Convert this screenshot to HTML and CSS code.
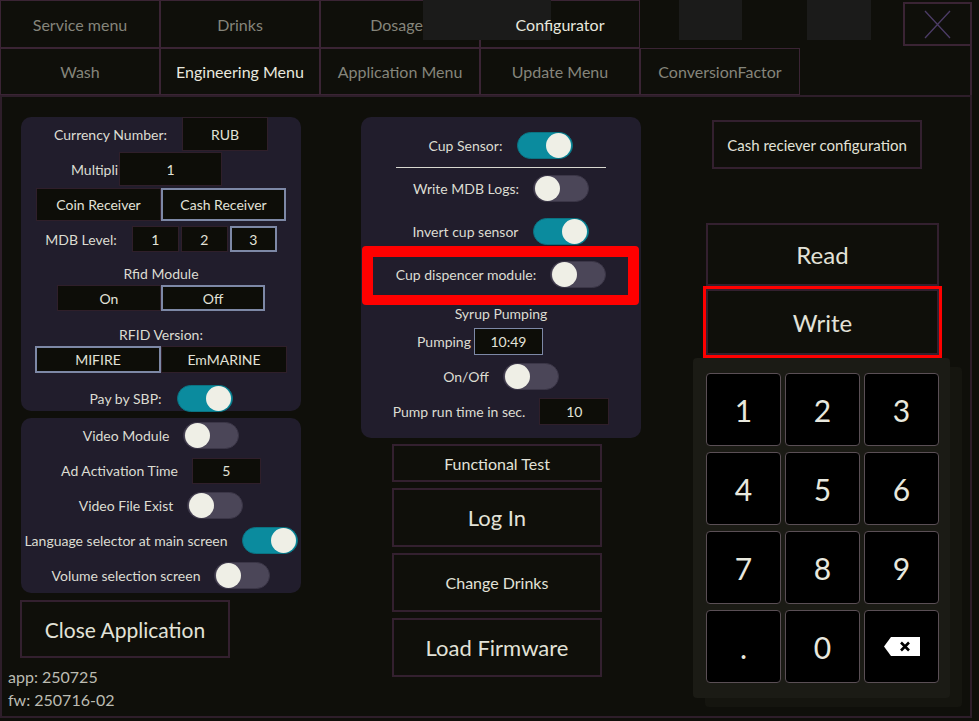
FILE: index.html
```
<!DOCTYPE html>
<html>
<head>
<meta charset="utf-8">
<link rel="stylesheet" href="styles.css">
</head>
<body>
<div class="screen">
  <div class="tabrow row1">
    <div class="tab">Service menu</div>
    <div class="tab">Drinks</div>
    <div class="tab">Dosages</div>
    <div class="tab on"><span class="over">Configurator</span></div>
    <div class="tab-gap"></div>
    <div class="close-x">
      <svg width="27" height="29" viewBox="0 0 27 29"><path d="M1 1 L26 28 M26 1 L1 28" stroke="#4c3c66" stroke-width="1.3" fill="none"/></svg>
    </div>
  </div>
  <div class="tabrow row2">
    <div class="tab">Wash</div>
    <div class="tab on">Engineering Menu</div>
    <div class="tab">Application Menu</div>
    <div class="tab">Update Menu</div>
    <div class="tab">ConversionFactor</div>
    <div class="row2-fill"></div>
  </div>

  <div class="main">
    <div class="col col-left">
      <div class="panel p1">
        <div class="row r-cur"><span class="lbl">Currency Number:</span><div class="field f-cur">RUB</div></div>
        <div class="row r-mul"><span class="lbl">Multipli</span><div class="field f-mul">1</div></div>
        <div class="row r-recv"><div class="seg w125">Coin Receiver</div><div class="seg w125 sel">Cash Receiver</div></div>
        <div class="row r-mdb"><span class="lbl">MDB Level:</span>
          <div class="segs"><div class="seg mdb">1</div><div class="seg mdb">2</div><div class="seg mdb sel">3</div></div>
        </div>
        <div class="caption c-rfid">Rfid Module</div>
        <div class="row r-onoff"><div class="seg w104">On</div><div class="seg w104 sel">Off</div></div>
        <div class="caption c-ver">RFID Version:</div>
        <div class="row r-ver"><div class="seg w126 sel">MIFIRE</div><div class="seg w126">EmMARINE</div></div>
        <div class="row r-sbp"><span class="lbl">Pay by SBP:</span><div class="toggle on"><span class="knob"></span></div></div>
      </div>
      <div class="panel p2">
        <div class="row r35"><span class="lbl">Video Module</span><div class="toggle"><span class="knob"></span></div></div>
        <div class="row r35"><span class="lbl">Ad Activation Time</span><div class="field f-ad">5</div></div>
        <div class="row r35"><span class="lbl">Video File Exist</span><div class="toggle"><span class="knob"></span></div></div>
        <div class="row r35"><span class="lbl">Language selector at main screen</span><div class="toggle on"><span class="knob"></span></div></div>
        <div class="row r35"><span class="lbl">Volume selection screen</span><div class="toggle"><span class="knob"></span></div></div>
      </div>
      <div class="btn btn-close">Close Application</div>
      <div class="versions">
        <div>app: 250725</div>
        <div>fw: 250716-02</div>
      </div>
    </div>

    <div class="col col-mid">
      <div class="panel p3">
        <div class="row m-cup"><span class="lbl">Cup Sensor:</span><div class="toggle on"><span class="knob"></span></div></div>
        <div class="sep"></div>
        <div class="row m-mdb"><span class="lbl">Write MDB Logs:</span><div class="toggle"><span class="knob"></span></div></div>
        <div class="row m-inv"><span class="lbl">Invert cup sensor</span><div class="toggle on"><span class="knob"></span></div></div>
        <div class="row m-disp"><span class="lbl">Cup dispencer module:</span><div class="toggle"><span class="knob"></span></div><span class="redbox"></span></div>
        <div class="caption m-syrup">Syrup Pumping</div>
        <div class="row m-pump"><span class="lbl">Pumping</span><div class="field sel f-pump">10:49</div></div>
        <div class="row m-onoff"><span class="lbl">On/Off</span><div class="toggle"><span class="knob"></span></div></div>
        <div class="row m-run"><span class="lbl">Pump run time in sec.</span><div class="field f-run">10</div></div>
      </div>
      <div class="btn mid-btn b-test">Functional Test</div>
      <div class="btn mid-btn b-big">Log In</div>
      <div class="btn mid-btn b-mid">Change Drinks</div>
      <div class="btn mid-btn b-big">Load Firmware</div>
    </div>

    <div class="col col-right">
      <div class="btn b-cash">Cash reciever configuration</div>
      <div class="btn b-rw b-read">Read</div>
      <div class="btn b-rw b-write">Write</div>
      <div class="keypad">
        <div class="key">1</div><div class="key">2</div><div class="key">3</div>
        <div class="key">4</div><div class="key">5</div><div class="key">6</div>
        <div class="key">7</div><div class="key">8</div><div class="key">9</div>
        <div class="key">.</div><div class="key">0</div>
        <div class="key"><svg width="36" height="19" viewBox="0 0 36 19"><path d="M0 9.5 L7 0 L36 0 L36 19 L7 19 Z" fill="#ffffff"/><path d="M17 5.5 L25 13.5 M25 5.5 L17 13.5" stroke="#000" stroke-width="2.6" fill="none"/></svg></div>
      </div>
    </div>
  </div>

  <div class="redact rd1"></div>
  <div class="redact rd2"></div>
  <div class="redact rd3"></div>
</div>
</body>
</html>
```
FILE: styles.css
```
* { box-sizing: border-box; }
html, body { margin: 0; padding: 0; }
body {
  background: #0f0f0a;
  font-family: Lato, "Open Sans", sans-serif;
  color: #dcdcd2;
  width: 979px;
  height: 721px;
  overflow: hidden;
}
.screen { position: relative; width: 979px; height: 721px; }

/* tabs */
.tabrow { display: flex; }
.row1 { height: 48px; }
.row2 { height: 47px; }
.tab {
  width: 160px;
  height: 48px;
  border: 1px solid #3a2434;
  display: flex;
  align-items: center;
  justify-content: center;
  font-size: 16px;
  color: #85857b;
  flex: none;
}
.row2 .tab { height: 47px; }
.tab.on { color: #e8e8de; }
.over { position: relative; z-index: 2; }
.tab-gap { flex: 1; }
.close-x {
  width: 69px;
  height: 44px;
  margin-top: 2px;
  margin-right: 7px;
  border: 2px solid #3a2434;
  display: flex;
  align-items: center;
  justify-content: center;
}
.row2-fill {
  flex: 1;
  margin-right: 7px;
  margin-top: -2px;
  border-right: 2px solid #3a2434;
}

.redact { position: absolute; top: 0; height: 40px; background: #1b1b1a; z-index: 1; }
.rd1 { left: 423px; width: 128px; }
.rd2 { left: 679px; width: 63px; }
.rd3 { left: 807px; width: 64px; }

/* main frame */
.main {
  width: 972px;
  height: 623px;
  border: 2px solid #2e1e2a;
  display: flex;
}
.col { display: flex; flex-direction: column; flex: none; }
.col-left { width: 340px; padding-top: 20px; }
.col-mid { width: 280px; margin-left: 19px; padding-top: 20px; }
.col-right { width: 270px; margin-left: 52px; padding-top: 23px; }

.panel {
  background: #211d2c;
  border-radius: 10px;
  width: 280px;
  display: flex;
  flex-direction: column;
  flex: none;
}
.col-left .panel { margin-left: 19px; }
.p1 { height: 294px; }
.p2 { height: 175px; margin-top: 7px; }
.p3 { height: 321px; }

.row {
  display: flex;
  align-items: center;
  justify-content: center;
  gap: 14px;
  font-size: 14px;
  white-space: nowrap;
  flex: none;
}
.lbl { color: #dcdcd2; font-size: 14px; }
.caption { text-align: center; font-size: 14px; color: #dcdcd2; height: 22px; line-height: 22px; flex: none; }

.field {
  background: #0d0d08;
  border: 1px solid #2f1f2a;
  display: flex;
  align-items: center;
  justify-content: center;
  font-size: 14px;
  color: #e2e2d8;
  flex: none;
}
.field.sel { border: 1px solid #7d88a6; }

.seg {
  background: #0d0d08;
  border: 1px solid #2f1f2a;
  height: 100%;
  display: flex;
  align-items: center;
  justify-content: center;
  font-size: 14px;
  color: #e2e2d8;
  flex: none;
}
.seg.sel { border: 2px solid #7d88a6; }
.segs { display: flex; gap: 2px; height: 100%; }

/* panel 1 rows */
.r-cur { height: 34px; gap: 15px; }
.f-cur { width: 86px; height: 34px; }
.r-mul { height: 34px; margin-top: 1px; justify-content: flex-start; padding-left: 50px; gap: 1px; }
.f-mul { width: 103px; height: 34px; }
.r-recv { height: 33px; margin-top: 2px; gap: 0; }
.w125 { width: 125px; }
.r-mdb { height: 26px; margin-top: 5px; gap: 15px; }
.mdb { width: 47px; }
.c-rfid { margin-top: 11px; }
.r-onoff { height: 26px; gap: 0; }
.w104 { width: 104px; }
.c-ver { margin-top: 13px; }
.r-ver { height: 27px; gap: 0; }
.w126 { width: 126px; }
.r-sbp { height: 28px; margin-top: 11px; gap: 15px; }

/* panel 2 rows */
.r35 { height: 35px; }
.f-ad { width: 69px; height: 26px; }

/* toggle */
.toggle {
  width: 56px;
  height: 27px;
  border-radius: 14px;
  background: #4b4658;
  border: 1px solid #3b3647;
  position: relative;
  flex: none;
}
.toggle.on { background: #0b8b9e; border-color: #0a7382; }
.knob {
  position: absolute;
  top: 0px;
  left: 1px;
  width: 25px;
  height: 25px;
  border-radius: 50%;
  background: #efefe6;
}
.toggle.on .knob { left: auto; right: 1px; }

/* buttons */
.btn {
  border: 2px solid #33202f;
  background: #0f0f0a;
  display: flex;
  align-items: center;
  justify-content: center;
  color: #e2e2d8;
  white-space: nowrap;
  flex: none;
}
.btn-close { width: 210px; height: 58px; margin-top: 7px; margin-left: 18px; font-size: 21px; }
.versions { margin-top: 7px; margin-left: 6px; font-size: 16px; line-height: 23px; color: #bcbcb2; }

/* middle panel rows */
.m-cup { height: 27px; margin-top: 15px; gap: 15px; }
.sep { height: 1px; background: #d8d8d0; width: 210px; margin: 8px auto 0; flex: none; }
.m-mdb { height: 27px; margin-top: 7px; }
.m-inv { height: 27px; margin-top: 16px; gap: 15px; }
.m-disp { height: 28px; margin-top: 15px; position: relative; }
.redbox {
  position: absolute;
  left: 1px;
  right: 2px;
  top: -14px;
  bottom: -17px;
  border: 11px solid #ff0000;
  border-bottom-width: 10px;
  border-radius: 4px;
}
.m-syrup { margin-top: 16px; height: 20px; line-height: 20px; }
.m-pump { height: 27px; margin-top: 4px; justify-content: flex-start; padding-left: 56px; gap: 3px; }
.f-pump { width: 69px; height: 27px; }
.m-onoff { height: 27px; margin-top: 8px; }
.m-run { height: 27px; margin-top: 8px; }
.f-run { width: 70px; height: 27px; }

.mid-btn { width: 210px; margin-left: 31px; margin-top: 6px; }
.b-test { height: 38px; font-size: 16px; }
.b-big { height: 59px; font-size: 22px; }
.b-mid { height: 59px; font-size: 16px; }

/* right column */
.b-cash { width: 210px; height: 49px; margin-left: 19px; font-size: 15px; }
.b-rw { width: 233px; margin-left: 13px; font-size: 24px; }
.b-read { height: 63px; margin-top: 54px; }
.b-write { height: 66px; margin-top: 3px; outline: 3px solid #ff0000; }
.keypad {
  width: 257px;
  height: 340px;
  margin-top: 3px;
  background: #1b1b15;
  border-radius: 4px;
  box-shadow: 12px 9px 0 #15150f;
  padding: 15px 0 0 13px;
  display: grid;
  grid-template-columns: repeat(3, 75px);
  grid-auto-rows: 73px;
  column-gap: 4px;
  row-gap: 6px;
  flex: none;
}
.key {
  background: #000000;
  border: 1px solid #5a4f55;
  border-radius: 4px;
  display: flex;
  align-items: center;
  justify-content: center;
  font-size: 30px;
  color: #e8e8de;
}
```
